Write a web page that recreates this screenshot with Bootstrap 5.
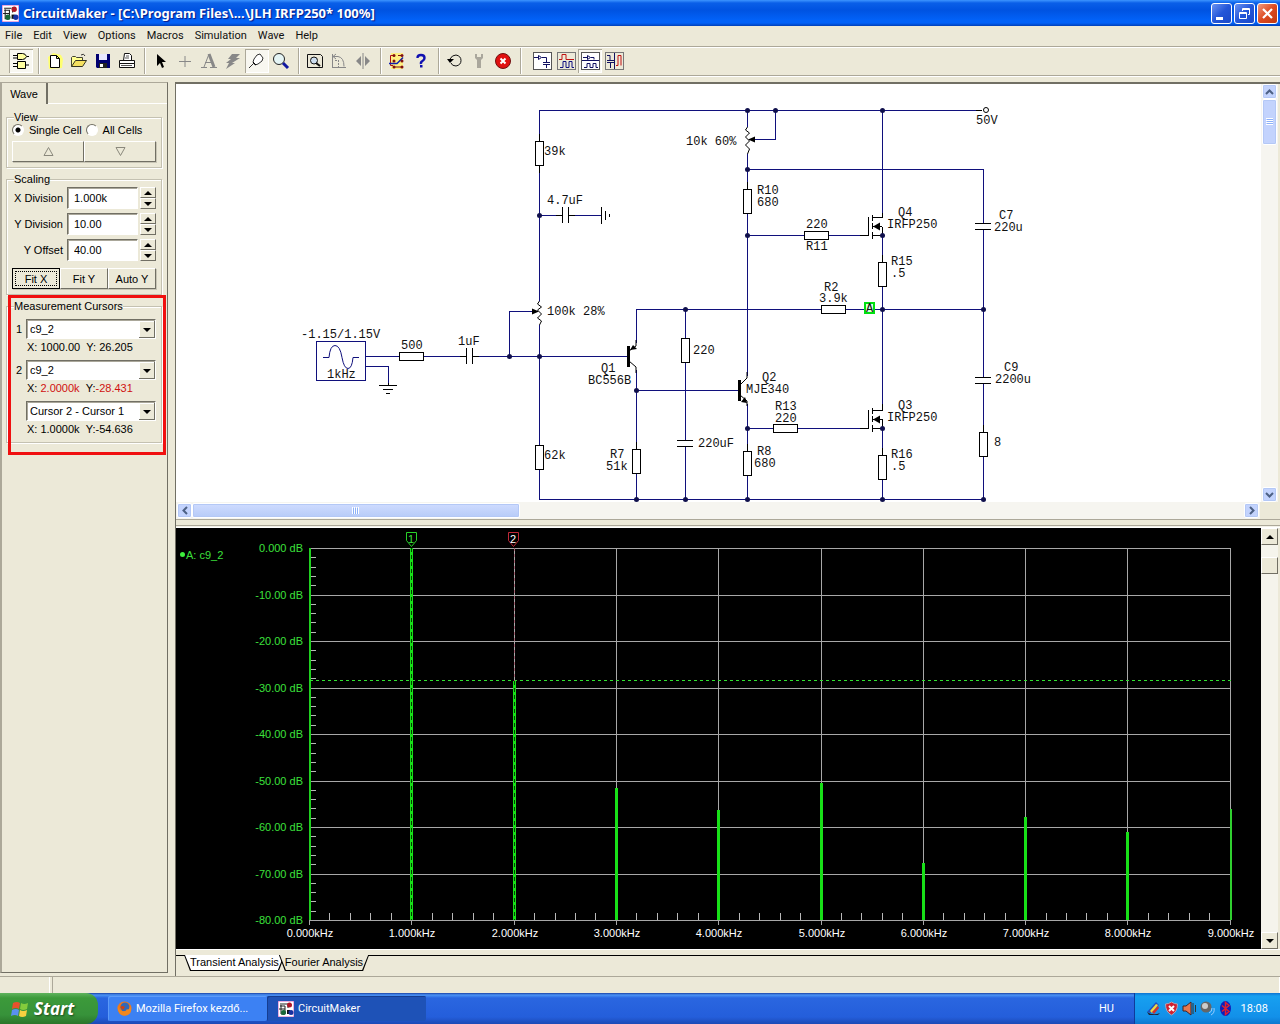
<!DOCTYPE html>
<html lang="en">
<head>
<meta charset="utf-8">
<meta name="viewport" content="width=device-width, initial-scale=1">
<title>CircuitMaker</title>
<link href="https://cdn.jsdelivr.net/npm/bootstrap@5.3.0/dist/css/bootstrap.min.css" rel="stylesheet">
<style>
:root{--face:#ece9d8;--shade:#aca899;--dark:#716f64;--ui:"Liberation Sans",Arial,sans-serif;--tahoma:Roboto,"Liberation Sans",sans-serif}
body{font-family:var(--ui);font-size:11px;line-height:14px;color:#000;background:var(--face)}
button,input,select{font:inherit;color:inherit;padding:0;border-radius:0}
svg{display:block;flex-shrink:0}
.titlebar{height:26px;padding:0 2px;background:linear-gradient(#3d95ff 0,#0a5fe8 3px,#0053e1 10px,#0262f8 20px,#0262f8 23px,#0140b8 26px);font-family:"Noto Sans","Open Sans",sans-serif;color:#fff}
.titletext{font-weight:700;font-size:13px;line-height:18px;text-shadow:1px 1px 1px #0a1883;margin:0}
.winbtns{gap:2px}
.winbtn{width:21px;height:21px;border:1px solid #fff;border-radius:3px;background:linear-gradient(135deg,#6b93f2,#2356d8 50%,#1b49c8)}
.winbtn.shut{background:linear-gradient(135deg,#f09a80,#dd4a20 50%,#c23a10)}
.menubar{height:20px;gap:11px;padding:0 5px;font-family:var(--tahoma)}
.menubar a{color:#111;text-decoration:none}
.toolbar{height:30px;padding:0 9px;border-top:1px solid var(--shade);border-bottom:1px solid var(--shade);box-shadow:inset 0 1px #fff,0 1px #fff}
.tool{width:24px;height:24px;border:0;background:none;display:flex;align-items:center;justify-content:center}
.tool.down{background:#f8f7f0;box-shadow:inset 1px 1px var(--shade),inset -1px -1px #fff}
.rule{width:2px;height:26px;margin:0 3px 0 5px;background:linear-gradient(90deg,var(--shade) 50%,#fff 50%)}
.workspace{margin-top:6px}
.side{width:168px;border-right:1px solid var(--dark);border-bottom:1px solid var(--dark);border-left:2px solid var(--shade);margin-bottom:3px;border-top:1px solid var(--shade);flex-shrink:0}
.tabstrip{height:21px;box-shadow:inset 0 -1px #fff}
.tabface{width:46px;border:0;border-right:2px solid var(--dark);background:var(--face);text-align:center}
.panels{padding:7px 5px 0 4px;gap:5px}
.group{border:1px solid #c4c1b1;padding:0 5px 5px;box-shadow:inset 1px 1px #fff,1px 1px #fff;min-width:0}
.group legend{float:none;width:auto;font-size:11px;line-height:12px;margin:0 0 0 2px;padding:0;height:12px;background:var(--face)}
.group .face,.spin button{background:var(--face);border:1px solid;border-color:#fff var(--dark) var(--dark) #fff;box-shadow:1px 1px #c8c5b5;height:21px}
.group .face.focus{border:1px solid #000;outline:1px dotted #000;outline-offset:-4px}
.radiobtn{appearance:none;width:12px;height:12px;border-radius:50%;border:1px solid;border-color:var(--dark) #fff #fff var(--dark);background:#fff;margin:0}
.radiobtn:checked{background:radial-gradient(#000 2px,#fff 3px)}
.radios label{margin:0 4px 0 5px}
.rows{gap:4px;padding-top:2px}
.fits{margin-top:3px}
.readouts{gap:5px;padding-top:7px}
.sunk{border:1px solid;border-color:var(--dark) #fff #fff var(--dark);background:#fff;height:22px;width:71px;padding:0 6px;box-shadow:inset 1px 1px #aaa79a}
.spin{width:16px;height:22px;margin-left:2px}
.spin button{height:11px;width:16px;display:flex;align-items:center;justify-content:center;box-shadow:none}
.pick{appearance:none;height:20px;width:130px;border:1px solid;border-color:var(--dark) #fff #fff var(--dark);padding:0 3px;box-shadow:inset 1px 1px #aaa79a;background:#fff url("data:image/svg+xml,%3Csvg xmlns='http://www.w3.org/2000/svg' width='16' height='17'%3E%3Crect width='16' height='17' fill='%23716f64'/%3E%3Crect width='15' height='16' fill='%23fff'/%3E%3Crect x='1' y='1' width='14' height='15' fill='%23ece9d8'/%3E%3Cpath d='M4 7h8l-4 4z'/%3E%3C/svg%3E") right 0 top 1px no-repeat}
.reading{line-height:16px;height:16px;padding-left:15px}
.reading b{font-weight:400;color:#d01010}
.redframe{position:absolute;left:1px;right:-5px;top:-17px;bottom:-13px;border:3px solid #f01010;pointer-events:none}
.viewer{margin-left:7px;border-left:1px solid var(--dark)}
.sheet{height:420px;border-top:2px solid var(--dark)}
.canvas{background:#fff}
.xpscroll{background:#f6f5f0}
.xpscroll.v{width:17px;padding:0 1px}
.xpscroll.h{height:17px;padding:1px}
.xpscroll button{border:1px solid #fff;border-radius:2px;background:#c3d3fd;width:15px;height:15px;display:flex;align-items:center;justify-content:center;box-shadow:0 0 0 1px #b4c8f6 inset}
.xpscroll.h .thumb{width:328px;background:linear-gradient(#cfdcff,#b7cbf8)}
.xpscroll.v .thumb{height:46px}
.splitter{height:9px;border-top:1px solid var(--shade);border-bottom:1px solid #fff;background:linear-gradient(var(--face) 5px,var(--shade) 5px,var(--shade) 6px,#f4f2e8 6px)}
.plot{background:#000}
.oldscroll{width:17px;background:#f5f4ec}
.oldscroll button{width:17px;height:17px;background:var(--face);border:1px solid;border-color:#fff var(--dark) var(--dark) #fff;display:flex;align-items:center;justify-content:center}
.oldscroll .thumb{margin-top:12px}
.rim{width:2px;background:var(--face)}
.sheets{height:27px;border-top:1px solid #fff;padding:5px 0 0 8px;background:linear-gradient(var(--face) 5px,#000 5px,#000 6px,var(--face) 6px)}
.sheettab{border:0;height:16px;background:#000;clip-path:polygon(0 0,100% 0,calc(100% - 6px) 100%,6px 100%);padding:0 1px 1px;margin-right:-6px}
.sheettab span{display:block;height:15px;line-height:15px;background:var(--face);padding:0 5px;clip-path:polygon(0 0,100% 0,calc(100% - 6px) 100%,6px 100%)}
.sheettab.on span{background:#fff}
.status{height:17px;border-top:1px solid var(--shade)}
.status .cell{border-right:1px solid #fff;width:50px}
.status .cell + .cell{border-left:1px solid var(--shade);margin-left:2px}
.taskbar{height:31px;font-family:var(--tahoma);color:#fff;background:linear-gradient(#1941a5 0,#4b93f5 2px,#2a66e0 5px,#245edb 24px,#1b49b5 31px)}
.start{width:98px;border:0;color:#fff;border-radius:0 12px 12px 0;background:linear-gradient(#5fb35d,#3c9a3a 5px,#37923a 22px,#2a7429);font:italic 700 17px/24px "Open Sans",sans-serif;text-shadow:1px 1px 2px #1c4a1c;padding-left:10px;gap:4px}
.tasks{padding-left:10px}
.task{width:159px;height:25px;border:0;border-radius:2px;color:#fff;padding:0 9px;gap:4px;background:#3c81f3;box-shadow:inset 1px 1px #5c9af8}
.task.active{background:#1e52b7;box-shadow:inset 1px 1px #153d91;padding:0 11px}
.tray{width:146px;border-left:1px solid #103a9a;background:linear-gradient(#0f74d2,#17a0f0 3px,#1290e9 24px,#0d78cf);padding:0 12px 0 11px;gap:3px}
.lbl{font-family:"Liberation Mono",monospace;font-size:12px;fill:#111}
.wire{stroke:#10107c;fill:none}
.part{stroke:#000;fill:none}
.box{stroke:#000;fill:#fff}
.dot circle{fill:#10104c}
.axis{font-family:"Liberation Sans",sans-serif;font-size:11px}
</style>
<script src="https://cdn.jsdelivr.net/npm/bootstrap@5.3.0/dist/js/bootstrap.bundle.min.js"></script>
</head>
<body class="d-flex flex-column vh-100 overflow-hidden">
<svg width="0" height="0" class="position-absolute" aria-hidden="true">
 <symbol id="app" viewBox="0 0 16 16"><rect width="16" height="16" fill="#fff" stroke="#d060c0"/><path d="M2 3h7M2 5h5v8H3V4M10 2v5M1 8h6" stroke="#222" fill="none"/><circle cx="11.500" cy="4" r="2.500" fill="#b01828"/><circle cx="5.500" cy="11.500" r="2.500" fill="#186838"/><path d="M9 9h3v4h-3z" fill="#111"/><circle cx="13" cy="11.500" r="2.500" fill="#1830a0"/></symbol>
</svg>

<header class="titlebar d-flex align-items-center flex-shrink-0">
 <svg width="17" height="17"><use href="#app"/></svg>
 <h1 class="titletext ms-1 flex-grow-1">CircuitMaker - [C:\Program Files\...\JLH IRFP250* 100%]</h1>
 <div class="winbtns d-flex flex-shrink-0">
  <button class="winbtn" aria-label="Minimize"><svg width="19" height="19"><path d="M4 13h7v3H4z" fill="#fff"/></svg></button>
  <button class="winbtn" aria-label="Restore"><svg width="19" height="19" fill="none" stroke="#fff"><path d="M4.500 8.500h7v6h-7zM4 9.500h8M7.500 7V4.500h7v6H13M7 5.500h8"/></svg></button>
  <button class="winbtn shut" aria-label="Close"><svg width="19" height="19"><path d="M5 5l9 9M14 5l-9 9" stroke="#fff" stroke-width="2.200"/></svg></button>
 </div>
</header>

<nav class="menubar d-flex align-items-center flex-shrink-0"><a href="#">File</a><a href="#">Edit</a><a href="#">View</a><a href="#">Options</a><a href="#">Macros</a><a href="#">Simulation</a><a href="#">Wave</a><a href="#">Help</a></nav>

<div class="toolbar d-flex align-items-center flex-shrink-0" role="toolbar" aria-label="Tools">
 <button class="tool down" aria-label="Parts"><svg width="20" height="20" fill="#ffffa0" stroke="#000"><path d="M6.500 2.500h5q3 0 4 3-1 3-4 3h-5zM6.500 10.500h8v7h-8zM2 4.500h4M2 7h4M16 5.500h2M2 12.500h4M2 15.500h4M15 14h3"/></svg></button>
 <span class="rule"></span>
 <button class="tool" aria-label="New"><svg width="18" height="18"><path d="M2 5l3-2 2-2 8 2 2 4-1 9-13 1z" fill="#ffff70"/><path d="M4.500 3.500h6l3 3v9h-9zM10.500 3.500v3h3" fill="#fff" stroke="#000"/></svg></button>
 <button class="tool" aria-label="Open"><svg width="18" height="18"><path d="M1.500 14.500V5.500l1-1h3l1 1h6v3" fill="#ffff90" stroke="#443"/><path d="M1.500 14.500l4-6h11l-4 6z" fill="#f4e060" stroke="#332"/><path d="M11 3q3-2 4 1" fill="none" stroke="#333"/></svg></button>
 <button class="tool" aria-label="Save"><svg width="16" height="16"><path d="M1 1h14v14H2l-1-1z" fill="#000070"/><path d="M4 1h8v6H4z" fill="#e8e8ff"/><path d="M4 10h8v5H4z" fill="#222"/><path d="M5 11h3v3H5z" fill="#fff"/></svg></button>
 <button class="tool" aria-label="Print"><svg width="18" height="18" fill="#fff" stroke="#111"><path d="M5.500 8.500l1-7h5l2 2v5M1.500 8.500h15v3h-15zM1.500 11.500h15v4h-15z"/><path d="M8 4h3M7 6h4M3 13.500h11" stroke="#555"/></svg></button>
 <span class="rule"></span>
 <button class="tool" aria-label="Select"><svg width="16" height="16"><path d="M4 1v12l3-3 2 5 2-1-2-5h4z"/></svg></button>
 <button class="tool" aria-label="Wire"><svg width="16" height="16"><path d="M8 3v11M2 8.500h12" stroke="#888"/></svg></button>
 <button class="tool" aria-label="Text"><svg width="18" height="18" fill="none" stroke="#888"><path d="M9 2l5 13" stroke-width="3"/><path d="M9 2L4 15M5 10.500h7M1 15.500h6M10 15.500h7"/></svg></button>
 <button class="tool" aria-label="Delete"><svg width="18" height="18"><path d="M8 2h8l-4 4h4L8 11h3L2 17l3-6H2l5-4H4z" fill="#888"/></svg></button>
 <button class="tool down" aria-label="Probe"><svg width="18" height="18" fill="#fff" stroke="#333"><path d="M1 16l6-6"/><path d="M5 10l2 3 3-1 4-3 1-3-3-4-3 1-3 4z"/><path d="M5 10l3 3" stroke="#000"/></svg></button>
 <button class="tool" aria-label="Zoom"><svg width="18" height="18"><circle cx="7" cy="7" r="5.500" fill="#e4f4f4" stroke="#222"/><path d="M11 11l5 5" stroke="#1018a0" stroke-width="3"/></svg></button>
 <span class="rule"></span>
 <button class="tool" aria-label="Fit"><svg width="18" height="18" fill="none" stroke="#111"><path d="M1.500 2.500h13l2 2v11h-15z"/><circle cx="8" cy="8.500" r="3.500" fill="#cde"/><path d="M10 11l4 3" stroke-width="2"/></svg></button>
 <button class="tool" aria-label="Rotate"><svg width="18" height="18" fill="none" stroke="#888"><path d="M2.500 2v14M2 15.500h14M2 4.500h6M6 2L3 4.500 6 7M8 4.500q6 1 6 10"/><path d="M5 8.500h4M8.500 8v7" stroke-dasharray="2 1"/></svg></button>
 <button class="tool" aria-label="Mirror"><svg width="18" height="18"><path d="M7 4v10L2 9zM11 4v10l5-5z" fill="#888"/><path d="M9 1v16" stroke="#888"/></svg></button>
 <span class="rule"></span>
 <button class="tool" aria-label="Run digital"><svg width="18" height="18"><path d="M3 1h12v16H3z" fill="#fff080"/><path d="M6 3.500H2.500v10H5" stroke="#b01010" fill="none"/><path d="M1 11.500h8l6-6" stroke="#1020b0" fill="none" stroke-width="1.500"/><g fill="#801010"><circle cx="6" cy="3.500" r="1.500"/><circle cx="6" cy="9" r="1.500"/><circle cx="6" cy="15" r="1.500"/><circle cx="14" cy="3.500" r="1.500"/><circle cx="14" cy="9" r="1.500"/><circle cx="14" cy="15" r="1.500"/></g><path d="M6 15h7M10 3.500h4" stroke="#801010"/></svg></button>
 <button class="tool" aria-label="Help"><svg width="16" height="16"><path d="M4.500 5q0-3 3.500-3t3.500 3q0 2-2 3T8 11" fill="none" stroke="#1010b0" stroke-width="2.400"/><path d="M7 12h2.500v2.500H7z" fill="#1010b0"/></svg></button>
 <span class="rule"></span>
 <button class="tool" aria-label="Reset"><svg width="18" height="18"><path d="M4 7q2-4 6-4 5 1 5 5.500T10 14q-4 0-5-3" fill="none" stroke="#111"/><path d="M1 7h7l-4 4z"/></svg></button>
 <button class="tool" aria-label="Step"><svg width="18" height="18"><path d="M5 2v4l2 2v8h4V8l2-2V2h-2v3H7V2z" fill="#aaa79c"/></svg></button>
 <button class="tool" aria-label="Stop"><svg width="18" height="18"><circle cx="9" cy="9" r="7.500" fill="#e01010" stroke="#701010"/><path d="M6.500 6.500l5 5M11.500 6.500l-5 5" stroke="#fff" stroke-width="2"/></svg></button>
 <span class="rule me-2"></span>
 <button class="tool" aria-label="Schematic"><svg width="19" height="18" fill="none" stroke="#101060"><rect x=".5" y=".5" width="18" height="17" fill="#fff" stroke="#555"/><path d="M1 5.500h4M5.500 3.500v4l3-2zM9 5.500h4.500V10M10 10.500h7M10 12.500h7M13.500 13v3"/></svg></button>
 <button class="tool" aria-label="Waves"><svg width="19" height="18" fill="none" stroke="#101080"><rect x=".5" y=".5" width="18" height="17" stroke="#777"/><path d="M2 7.500h3v-5h4v5h8" stroke="#c01010"/><path d="M3 15.500h3v-6h3v6h3v-6h3v6h2"/></svg></button>
 <button class="tool down" aria-label="Split horizontally"><svg width="19" height="18" fill="none" stroke="#101060"><rect x=".5" y=".5" width="18" height="17" fill="#fff" stroke="#555"/><path d="M1 8.500h17M2 5.500h4M6.500 3.500v4l3-2zM10 5.500h3v2M3 15.500h3v-4h3v4h3v-4h3v4h2"/></svg></button>
 <button class="tool" aria-label="Split vertically"><svg width="19" height="18" fill="none" stroke="#101060"><rect x=".5" y=".5" width="18" height="17" stroke="#777"/><path d="M9.500 1v16M2 3.500h3v5M2 8.500h7M2 10.500h7M5.500 11v5"/><path d="M11 13.500h2v-10h3v10" stroke="#c01010"/></svg></button>
</div>

<div class="workspace d-flex flex-grow-1 overflow-hidden">
 <aside class="side">
  <div class="tabstrip d-flex"><button class="tabface">Wave</button></div>
  <div class="panels d-flex flex-column">
   <fieldset class="group">
    <legend>View</legend>
    <div class="radios d-flex align-items-center mb-1">
     <input class="radiobtn" type="radio" name="cells" id="single" checked><label for="single">Single Cell</label>
     <input class="radiobtn" type="radio" name="cells" id="all"><label for="all">All Cells</label>
    </div>
    <div class="d-flex">
     <button class="face flex-fill" aria-label="Previous cell"><svg class="mx-auto" width="11" height="9" fill="none" stroke="#8a887c"><path d="M1 8.500L5.500.5 10 8.500z"/></svg></button>
     <button class="face flex-fill" aria-label="Next cell"><svg class="mx-auto" width="11" height="9" fill="none" stroke="#8a887c"><path d="M1 .5l4.500 8L10 .5z"/></svg></button>
    </div>
   </fieldset>
   <fieldset class="group">
    <legend>Scaling</legend>
    <div class="rows d-flex flex-column">
     <div class="d-flex align-items-center justify-content-end"><label class="me-1" for="xd">X Division</label><input class="sunk" id="xd" value="1.000k"><div class="spin"><button aria-label="Increase X"><svg width="8" height="4"><path d="M0 4h8L4 0z"/></svg></button><button aria-label="Decrease X"><svg width="8" height="4"><path d="M0 0h8L4 4z"/></svg></button></div></div>
     <div class="d-flex align-items-center justify-content-end"><label class="me-1" for="yd">Y Division</label><input class="sunk" id="yd" value="10.00"><div class="spin"><button aria-label="Increase Y"><svg width="8" height="4"><path d="M0 4h8L4 0z"/></svg></button><button aria-label="Decrease Y"><svg width="8" height="4"><path d="M0 0h8L4 4z"/></svg></button></div></div>
     <div class="d-flex align-items-center justify-content-end"><label class="me-1" for="yo">Y Offset</label><input class="sunk" id="yo" value="40.00"><div class="spin"><button aria-label="Increase offset"><svg width="8" height="4"><path d="M0 4h8L4 0z"/></svg></button><button aria-label="Decrease offset"><svg width="8" height="4"><path d="M0 0h8L4 4z"/></svg></button></div></div>
     <div class="fits d-flex"><button class="face focus w-100">Fit X</button><button class="face w-100">Fit Y</button><button class="face w-100">Auto Y</button></div>
    </div>
   </fieldset>
   <fieldset class="group position-relative">
    <legend>Measurement Cursors</legend>
    <div class="readouts d-flex flex-column">
     <div><div class="d-flex justify-content-between align-items-center"><label class="ms-1" for="c1">1</label><select class="pick" id="c1"><option>c9_2</option></select></div><div class="reading">X: 1000.00 &nbsp;Y: 26.205</div></div>
     <div><div class="d-flex justify-content-between align-items-center"><label class="ms-1" for="c2">2</label><select class="pick" id="c2"><option>c9_2</option></select></div><div class="reading">X: <b>2.0000k</b> &nbsp;Y:<b>-28.431</b></div></div>
     <div><div class="d-flex justify-content-end"><select class="pick" aria-label="Difference"><option>Cursor 2 - Cursor 1</option></select></div><div class="reading">X: 1.0000k &nbsp;Y:-54.636</div></div>
    </div>
    <div class="redframe"></div>
   </fieldset>
  </div>
 </aside>

 <main class="viewer flex-grow-1 d-flex flex-column overflow-hidden">
  <section class="sheet d-flex flex-shrink-0">
   <div class="canvas flex-grow-1 overflow-hidden">
    <svg width="100%" height="100%" role="img" aria-label="Schematic"><g transform="translate(-176 -84)">
     <g class="wire" shape-rendering="crispEdges">
      <path d="M539.500 499.500V110.500H982M747.500 110v320M775.500 110v29H755M747.500 169.500H983.500V499.500H539.500M882.500 110v105M882.500 235v180M882.500 428v71M747.500 235.500H862M747.500 428.500H862M747.500 428v71M636.500 343V309.500H983.500M685.500 309v190M636.500 370v129M636.500 390.500H738M366 356.500H628M366 366.500H388.500V383M509.500 356V311.500H532M539.500 215.500H601"/>
      <rect x="316.500" y="341.500" width="49" height="39" fill="#fff"/>
     </g>
     <path class="wire" stroke="#2030a0" d="M323 357.500h6q1-12 6-12t7 12q2 11 6 11t5-11h6"/>
     <g class="box" shape-rendering="crispEdges">
      <rect x="535.500" y="141.500" width="8" height="24"/><rect x="535.500" y="445.500" width="8" height="24"/><rect x="399.500" y="352.500" width="24" height="8"/><rect x="743.500" y="189.500" width="8" height="24"/><rect x="804.500" y="231.500" width="24" height="8"/><rect x="878.500" y="262.500" width="8" height="24"/><rect x="821.500" y="305.500" width="24" height="8"/><rect x="681.500" y="338.500" width="8" height="24"/><rect x="632.500" y="449.500" width="8" height="24"/><rect x="743.500" y="451.500" width="8" height="24"/><rect x="773.500" y="424.500" width="24" height="8"/><rect x="878.500" y="455.500" width="8" height="24"/><rect x="979.500" y="432.500" width="8" height="24"/>
     </g>
     <!-- gaps between capacitor plates, channels and wipers -->
     <g fill="#fff"><path d="M563 210h6v12h-6zM467 350h6v12h-6zM976 224h16v6h-16zM976 378h16v6h-16zM678 440h16v6h-16zM744 127h8v27h-8zM536 301h8v24h-8zM744 376h8v28h-8zM877 214h8v22h-8zM877 408h8v20h-8z"/></g>
     <g class="part" shape-rendering="crispEdges">
      <path d="M562.500 207v16M568.500 207v16M556 215.500h6M569 215.500h6M466.500 348v16M472.500 348v16M460 356.500h6M473 356.500h6M975 223.500h16M975 229.500h16M975 377.500h16M975 383.500h16M677 440.500h16M677 446.500h16"/>
      <path d="M601.500 207v17M605.500 211v9M609.500 214v3M379 385.500h18M383 389.500h10M386 393.500h4M388.500 383v2"/>
      <path d="M539.500 134v7M539.500 166v7M747.500 182v7M882.500 255v7M882.500 448v7M747.500 444v7M983.500 425v7M636.500 442v7M860 235.500h8.500V217M868.500 410v18.500H860M872.500 215v6M872.500 223v6M872.500 232v7M872 217.500h10.500V213M872 235.500h10M882.500 226.500V235M872.500 408v6M872.500 416v6M872.500 425v7M872 410.500h10.500V404M872 428.500h10M882.500 419V428M872 226.500h10M872 419.500h10M976 110.500h6"/>
     </g>
     <path class="part" d="M747.500 127l-2 3 4 3-4 4 4 4-4 4 4 4-2 5M539.500 301l-2 3 4 3-4 3 4 4-4 4 4 3-2 4M629 351l7-5V340M629 361l7 6v6M740 385l7-7v-6M740 395l7 6v5"/>
     <path d="M627 346h3v21h-3zM738 380h3v21h-3zM630 350l3-5 4 4zM747 403l-6-1 4-5zM873 226.500l7-4v8zM873 419.500l7-4v8zM748 139.500l7-3v6zM539 311.500l-7-3v6z"/>
     <g class="dot"><circle cx="747.500" cy="110.500" r="2.500"/><circle cx="775.500" cy="110.500" r="2.500"/><circle cx="882.500" cy="110.500" r="2.500"/><circle cx="747.500" cy="169.500" r="2.500"/><circle cx="539.500" cy="215.500" r="2.500"/><circle cx="747.500" cy="235.500" r="2.500"/><circle cx="882.500" cy="235.500" r="2.500"/><circle cx="685.500" cy="309.500" r="2.500"/><circle cx="882.500" cy="309.500" r="2.500"/><circle cx="983.500" cy="309.500" r="2.500"/><circle cx="509.500" cy="356.500" r="2.500"/><circle cx="539.500" cy="356.500" r="2.500"/><circle cx="636.500" cy="390.500" r="2.500"/><circle cx="747.500" cy="428.500" r="2.500"/><circle cx="882.500" cy="428.500" r="2.500"/><circle cx="636.500" cy="499.500" r="2.500"/><circle cx="685.500" cy="499.500" r="2.500"/><circle cx="747.500" cy="499.500" r="2.500"/><circle cx="882.500" cy="499.500" r="2.500"/><circle cx="983.500" cy="499.500" r="2.500"/></g>
     <circle class="box" cx="986" cy="110" r="2.500"/>
     <rect x="865" y="303" width="9" height="10" fill="#dfd" stroke="#00e010" stroke-width="2"/>
     <g class="lbl">
      <text x="976" y="124">50V</text><text x="686" y="145">10k 60%</text><text x="544" y="155">39k</text><text x="547" y="204">4.7uF</text><text x="757" y="194">R10</text><text x="757" y="206">680</text><text x="806" y="228">220</text><text x="806" y="250">R11</text><text x="898" y="216">Q4</text><text x="887" y="228">IRFP250</text><text x="999" y="219">C7</text><text x="994" y="231">220u</text><text x="891" y="265">R15</text><text x="891" y="277">.5</text><text x="824" y="291">R2</text><text x="819" y="302">3.9k</text><text x="547" y="315">100k 28%</text><text x="301" y="338">-1.15/1.15V</text><text x="327" y="378">1kHz</text><text x="401" y="349">500</text><text x="458" y="345">1uF</text><text x="601" y="372">Q1</text><text x="588" y="384">BC556B</text><text x="693" y="354">220</text><text x="762" y="381">Q2</text><text x="746" y="393">MJE340</text><text x="775" y="410">R13</text><text x="775" y="422">220</text><text x="898" y="409">Q3</text><text x="887" y="421">IRFP250</text><text x="1004" y="371">C9</text><text x="995" y="383">2200u</text><text x="994" y="446">8</text><text x="544" y="459">62k</text><text x="610" y="458">R7</text><text x="606" y="470">51k</text><text x="698" y="447">220uF</text><text x="757" y="455">R8</text><text x="754" y="467">680</text><text x="891" y="458">R16</text><text x="891" y="470">.5</text><text x="866" y="312">A</text>
     </g>
    </g></svg>
   </div>
   <div class="xpscroll v d-flex flex-column"><button aria-label="Up"><svg width="9" height="6"><path d="M1 5l3.500-3.500L8 5" fill="none" stroke="#4d6185" stroke-width="2"/></svg></button><button class="thumb" aria-label="Scroll vertically"><svg width="7" height="8"><path d="M0 .5h7M0 2.500h7M0 4.500h7M0 6.500h7" stroke="#fff"/><path d="M1 1.500h6M1 3.500h6M1 5.500h6" stroke="#8cb0f8"/></svg></button><button class="mt-auto" aria-label="Down"><svg width="9" height="6"><path d="M1 1l3.500 3.500L8 1" fill="none" stroke="#4d6185" stroke-width="2"/></svg></button></div>
   <span class="rim"></span>
  </section>
  <div class="d-flex flex-shrink-0">
   <div class="xpscroll h d-flex flex-grow-1"><button aria-label="Left"><svg width="6" height="9"><path d="M5 1L1.500 4.500 5 8" fill="none" stroke="#4d6185" stroke-width="2"/></svg></button><button class="thumb" aria-label="Scroll horizontally"><svg width="8" height="7"><path d="M.5 0v7M2.500 0v7M4.500 0v7M6.500 0v7" stroke="#fff"/><path d="M1.500 1v6M3.500 1v6M5.500 1v6" stroke="#8cb0f8"/></svg></button><button class="ms-auto" aria-label="Right"><svg width="6" height="9"><path d="M1 1l3.500 3.500L1 8" fill="none" stroke="#4d6185" stroke-width="2"/></svg></button></div>
   <div class="pe-3 me-1"></div>
  </div>
  <div class="splitter flex-shrink-0"></div>
  <section class="d-flex flex-grow-1 overflow-hidden">
   <div class="plot flex-grow-1 overflow-hidden">
    <svg width="100%" height="100%" role="img" aria-label="Fourier spectrum"><g class="axis" transform="translate(-176 -528)">
     <circle cx="182.500" cy="554.500" r="2.500" fill="#3cf03c"/><text x="186" y="559" fill="#3ce03c">A: c9_2</text>
     <g id="grid" shape-rendering="crispEdges"></g>
     <path d="M406.500 532.500h10v8l-5 6-5-6z" fill="#000" stroke="#28d028"/><text x="408" y="543" fill="#3ce03c">1</text>
     <path d="M508.500 532.500h10v8l-5 6-5-6z" fill="#000" stroke="#c02838"/><text x="510" y="543" fill="#fff">2</text>
    </g></svg>
   </div>
   <div class="oldscroll d-flex flex-column"><button aria-label="Page up"><svg width="8" height="4"><path d="M0 4h8L4 0z"/></svg></button><button class="thumb" aria-label="Scroll plot"></button><button class="mt-auto" aria-label="Page down"><svg width="8" height="4"><path d="M0 0h8L4 4z"/></svg></button></div>
   <span class="rim"></span>
  </section>
  <div class="sheets d-flex align-items-start flex-shrink-0"><button class="sheettab on"><span>Transient Analysis</span></button><button class="sheettab"><span>Fourier Analysis</span></button></div>
 </main>
</div>

<div class="status d-flex flex-shrink-0"><div class="cell"></div><div class="cell flex-grow-1"></div></div>

<footer class="taskbar d-flex align-items-center flex-shrink-0">
 <button class="start d-flex align-items-center h-100"><svg width="20" height="20"><path d="M3 4q4-2 7 0l-1 6q-3-2-7 0z" fill="#e8502c"/><path d="M11 4q3 2 7 0l-1 6q-4 2-7 0z" fill="#84cc3c"/><path d="M2 11q4-2 7 0l-1 6q-3-2-7 0z" fill="#5a90f0"/><path d="M10 11q3 2 7 0l-1 6q-4 2-7 0z" fill="#f8d040"/></svg>Start</button>
 <div class="tasks d-flex flex-grow-1"><button class="task d-flex align-items-center"><svg width="15" height="15"><circle cx="7.500" cy="7.500" r="7" fill="#f07818"/><circle cx="8" cy="6" r="4.500" fill="#3068b8"/><path d="M1 4q0 5 4 6 4 1 5-2 2 2 3-3 3 6-2 9-5 2-8-1-3-3-2-9z" fill="#f08820"/><path d="M3 6q3-2 5 0L6 9z" fill="#d04010"/></svg><span class="text-nowrap">Mozilla Firefox kezdő...</span></button><button class="task active d-flex align-items-center"><svg width="16" height="16"><use href="#app"/></svg><span>CircuitMaker</span></button></div>
 <span class="me-3 pe-1">HU</span>
 <div class="tray d-flex align-items-center h-100">
  <svg width="15" height="15"><path d="M1 11L10 1l3 3-8 8z" fill="#2050c0"/><path d="M4 10l6-7 2 1-6 8z" fill="#f0d840"/><path d="M6 11l6-6 1 2-5 6z" fill="#d03030"/><path d="M1 11q6 4 13 1l-2 2H3z" fill="#223"/></svg>
  <svg width="15" height="15"><path d="M7.500 1q3 2 6 2 0 8-6 11-6-3-6-11 3 0 6-2z" fill="#d02030" stroke="#aab"/><path d="M5 5l5 5M10 5l-5 5" stroke="#fff" stroke-width="2"/></svg>
  <svg width="15" height="15" fill="none"><path d="M1 5h3l5-4v13l-5-4H1z" fill="#e87850" stroke="#422"/><path d="M11 2v11M13.500 4v7" stroke="#333"/></svg>
  <svg width="15" height="15"><circle cx="6" cy="6" r="5.500" fill="#666"/><circle cx="5" cy="5" r="3" fill="#ccc"/><path d="M9 12q3-1 3-5M11 14q4-2 3-7" stroke="#9cf" fill="none"/></svg>
  <svg width="15" height="15"><ellipse cx="7.500" cy="7.500" rx="5.500" ry="7.500" fill="#1020b8"/><path d="M4 4.500l7 6-3.500 3V1.500l3.500 3-7 6" stroke="#e02030" stroke-width="1.500" fill="none"/></svg>
  <span class="ms-auto">18:08</span>
 </div>
</footer>
<script>
// Spectrum plot: 0..9 kHz across, 0..-80 dB down
const X0 = 309, DX = 102.3, Y0 = 548, DY = 46.5, bottom = 920;
const peaks = [[1, 548], [2, 681], [3, 788], [4, 810], [5, 783], [6, 863], [7, 817], [8, 832], [9, 809]];
const px = k => Math.round(X0 + DX * k), py = k => Math.round(Y0 + DY * k);
let s = '';
const line = (x1, y1, x2, y2, c, extra = '') => { s += `<path d="M${x1} ${y1}L${x2} ${y2}" stroke="${c}" ${extra}/>`; };
for (let i = 0; i <= 8; i++) {
  line(310, py(i) + .5, 1231, py(i) + .5, '#a8a8a8');
  s += `<text x="303" y="${py(i) + 4}" text-anchor="end" fill="#3ce03c">${i ? '-' + i * 10 + '.00' : '0.000'} dB</text>`;
  if (i < 8) for (let j = 1; j < 5; j++) line(310, py(i + j / 5) + .5, 316, py(i + j / 5) + .5, '#b8b8b8');
}
for (let i = 0; i <= 9; i++) {
  line(px(i) + .5, Y0, px(i) + .5, 925, '#a8a8a8');
  s += `<text x="${px(i) + 1}" y="937" text-anchor="middle" fill="#fff">${i}.000kHz</text>`;
  if (i < 9) for (let j = 1; j < 5; j++) line(px(i + j / 5) + .5, 913, px(i + j / 5) + .5, bottom, '#b8b8b8');
}
line(310, Y0, 310, bottom, '#20d020', 'stroke-width="2"');
line(310, 680.5, 1231, 680.5, '#30e030', 'stroke-dasharray="3 3"');
for (const [k, y] of peaks) {
  if (k === 9) line(px(k) + .5, y, px(k) + .5, bottom, '#30d030', 'stroke-width="2"');
  else line(px(k) + .5, y, px(k) + .5, bottom, '#18e018', 'stroke-width="3"');
  if (k < 3) line(px(k) + .5, y, px(k) + .5, bottom, '#004000', 'stroke-dasharray="4 3"');
}
line(px(2) + .5, 548, px(2) + .5, 681, '#a06070', 'stroke-dasharray="3 3"');
document.getElementById('grid').innerHTML = s;
</script>
</body>
</html>
